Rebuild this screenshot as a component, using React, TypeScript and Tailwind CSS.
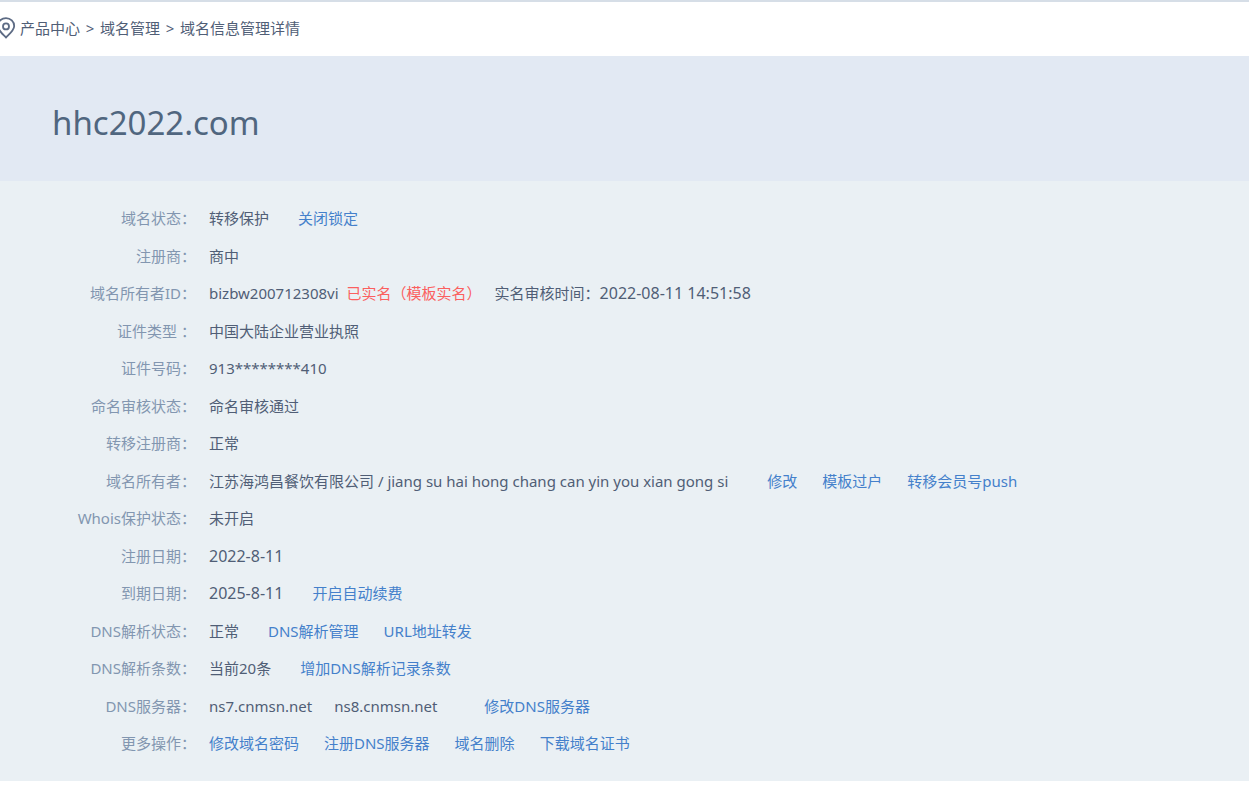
import { Fragment, type ReactNode } from "react";

type RowProps = {
  label: string;
  children: ReactNode;
};

const CRUMBS = ["产品中心", "域名管理", "域名信息管理详情"];

function PinIcon() {
  return (
    <svg
      width="20"
      height="22"
      viewBox="0 0 20 22"
      fill="none"
      stroke="#5d6b84"
      strokeWidth="1.8"
      strokeLinejoin="round"
      className="-ml-1 shrink-0"
      aria-hidden="true"
    >
      <path d="M10 20.6C6.6 17 1.8 13 1.8 8.9a8.2 7.8 0 0 1 16.4 0C18.2 13 13.4 17 10 20.6Z" />
      <circle cx="10" cy="9.4" r="3" />
    </svg>
  );
}

function Row({ label, children }: RowProps) {
  return (
    <div className="flex gap-[13px] leading-5 odd:pb-[18px] even:pb-[17px]">
      <dt className="w-[196px] shrink-0 whitespace-nowrap text-right text-[#8296b0]">{label}</dt>
      <dd className="flex flex-wrap">{children}</dd>
    </div>
  );
}

function Latin({ children }: { children: ReactNode }) {
  return <span className="text-base leading-5">{children}</span>;
}

function Actions({ items, flush = false }: { items: string[]; flush?: boolean }) {
  return (
    <span className={`flex flex-wrap gap-x-[25px] ${flush ? "" : "ml-[29px]"}`}>
      {items.map((item) => (
        <a key={item} href="#" className="text-[#4480cb] hover:underline">
          {item}
        </a>
      ))}
    </span>
  );
}

export default function App() {
  return (
    <div className="bg-white font-['Noto_Sans','Noto_Sans_CJK_SC',sans-serif] text-[15px] text-[#505e76]">
      <nav className="flex h-14 items-center border-t-2 border-[#d6dee7] pb-[3px]" aria-label="当前位置">
        <PinIcon />
        <ol className="ml-1 flex pt-px">
          {CRUMBS.map((crumb, i) => (
            <Fragment key={crumb}>
              {i > 0 && <li className="w-5 text-center">&gt;</li>}
              <li>
                <a href="#">{crumb}</a>
              </li>
            </Fragment>
          ))}
        </ol>
      </nav>

      <header className="flex h-[125px] items-center bg-[#e2e9f3] px-[52px] pt-2">
        <h1 className="text-[33px] text-[#50667f]">hhc2022.com</h1>
      </header>

      <dl className="bg-[#eaf0f4] pt-[27px] pb-[10px]">
        <Row label="域名状态：">
          转移保护
          <Actions items={["关闭锁定"]} />
        </Row>
        <Row label="注册商：">商中</Row>
        <Row label="域名所有者ID：">
          <span>bizbw200712308vi</span>
          <span className="ml-2 text-[#fb5f5f]">已实名（模板实名）</span>
          <span className="ml-[13px]">实名审核时间：</span>
          <Latin>2022-08-11 14:51:58</Latin>
        </Row>
        <Row label="证件类型 ：">中国大陆企业营业执照</Row>
        <Row label="证件号码：">913********410</Row>
        <Row label="命名审核状态：">命名审核通过</Row>
        <Row label="转移注册商：">正常</Row>
        <Row label="域名所有者：">
          <span className="mr-[10px]">
            江苏海鸿昌餐饮有限公司 / jiang su hai hong chang can yin you xian gong si
          </span>
          <Actions items={["修改", "模板过户", "转移会员号push"]} />
        </Row>
        <Row label="Whois保护状态：">未开启</Row>
        <Row label="注册日期：">
          <Latin>2022-8-11</Latin>
        </Row>
        <Row label="到期日期：">
          <Latin>2025-8-11</Latin>
          <Actions items={["开启自动续费"]} />
        </Row>
        <Row label="DNS解析状态：">
          正常
          <Actions items={["DNS解析管理", "URL地址转发"]} />
        </Row>
        <Row label="DNS解析条数：">
          当前20条
          <Actions items={["增加DNS解析记录条数"]} />
        </Row>
        <Row label="DNS服务器：">
          <span>ns7.cnmsn.net</span>
          <span className="ml-[22px]">ns8.cnmsn.net</span>
          <span className="ml-[18px]">
            <Actions items={["修改DNS服务器"]} />
          </span>
        </Row>
        <Row label="更多操作：">
          <Actions flush items={["修改域名密码", "注册DNS服务器", "域名删除", "下载域名证书"]} />
        </Row>
      </dl>
    </div>
  );
}
